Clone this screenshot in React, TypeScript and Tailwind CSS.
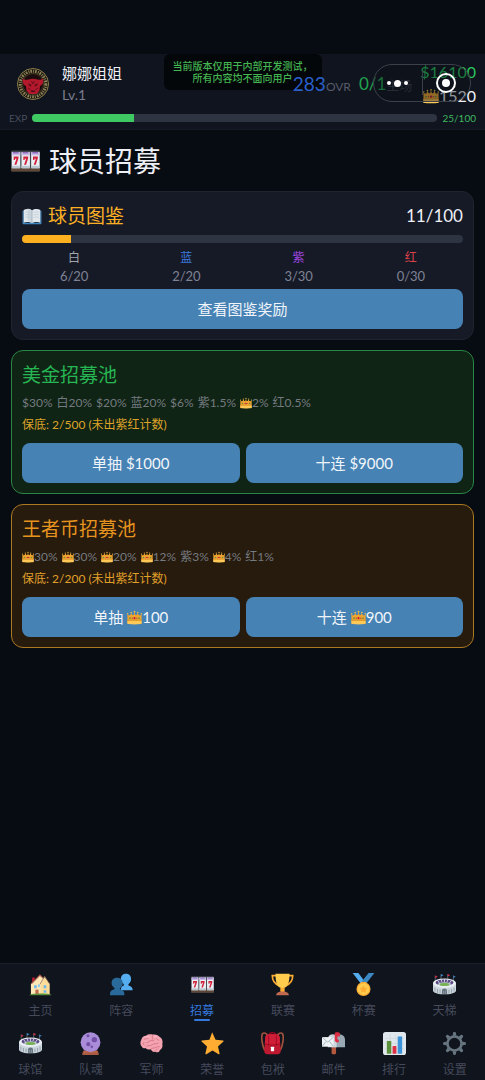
import type { ReactNode } from "react";

type IconProps = { className?: string };

function Glyph({ className, children }: IconProps & { children: ReactNode }) {
  return (
    <svg viewBox="0 0 36 36" className={className} aria-hidden="true">
      {children}
    </svg>
  );
}

const SEVEN = "M0 0h6v2.2L3.4 10H.9l2.6-7.2H1.7v1.4H0z";

function Slots({ className }: IconProps) {
  return (
    <svg viewBox="0 0 36 26" className={className} aria-hidden="true">
      <rect width="36" height="26" rx="1.500" fill="#41474d" />
      <path d="M0 21h36v3.500a1.500 1.500 0 0 1-1.500 1.500h-33A1.500 1.500 0 0 1 0 24.500z" fill="#5b4638" />
      {[1, 13, 25].map((x) => (
        <g key={x}>
          <rect x={x} y="2" width="10.500" height="20" rx=".8" fill="#e9eef3" />
          <rect x={x} y="2" width="10.500" height="4" fill="#c9bde6" />
          <rect x={x + 1.5} y="2" width="7" height="1.600" fill="#8a64b8" />
          <rect x={x} y="19" width="10.500" height="3" fill="#bcc6d0" />
          <path d={SEVEN} transform={`translate(${x + 2.3} 7.500)`} fill="#d2243f" />
        </g>
      ))}
    </svg>
  );
}

function Book({ className }: IconProps) {
  return (
    <Glyph className={className}>
      <path d="M1 9l2-1v22h30V8l2 1v22.500c0 .8-.7 1.500-1.500 1.500h-31C1.700 33 1 32.300 1 31.500z" fill="#3b88c3" />
      <path d="M3 7c4-2.500 11-2.500 15 1 4-3.500 11-3.500 15-1v23c-4-2-11-2-15 1-4-3-11-3-15-1z" fill="#e1e8ed" />
      <path d="M18 8c-2-2-5-3-8-3v22c3 0 6 1 8 3z" fill="#ccd6dd" />
      <path d="M18 8v23" stroke="#8899a6" strokeWidth="1" />
      <path d="M5.500 11.500c3-1 7-1 10 .5M5.500 16c3-1 7-1 10 .5M5.500 20.500c3-1 7-1 10 .5M20.500 12c3-1.500 7-1.500 10-.5M20.500 16.500c3-1.500 7-1.500 10-.5M20.500 21c3-1.500 7-1.500 10-.5" stroke="#b5c2cc" fill="none" />
    </Glyph>
  );
}

function Crown({ className }: IconProps) {
  return (
    <svg viewBox="0 0 36 34" className={className} aria-hidden="true">
      <path d="M1 8l3 4 4-1 2-5 3 5h3l2-7 2 7h3l3-5 2 5 4 1 3-4v24H1z" fill="#f0a430" />
      <g fill="#f9c64b">
        <circle cx="1.800" cy="8" r="1.600" />
        <circle cx="10" cy="5" r="1.800" />
        <circle cx="18" cy="3" r="2" />
        <circle cx="26" cy="5" r="1.800" />
        <circle cx="34.200" cy="8" r="1.600" />
      </g>
      <path d="M1 24h34v8c-9 2-25 2-34 0z" fill="#ffc957" />
      <path d="M1 22.500h34v2H1z" fill="#d28a25" />
      <circle cx="7" cy="18.500" r="2" fill="#5c913b" />
      <circle cx="18" cy="18.500" r="2.500" fill="#be1931" />
      <circle cx="29" cy="18.500" r="2" fill="#5c913b" />
      <circle cx="12.500" cy="18.500" r="1.400" fill="#8c3f4c" />
      <circle cx="23.500" cy="18.500" r="1.400" fill="#8c3f4c" />
    </svg>
  );
}

function House({ className }: IconProps) {
  return (
    <Glyph className={className}>
      <rect x="5" y="7" width="4" height="8" fill="#be1931" />
      <path d="M3 17L17 3l15 14v17H3z" fill="#ffe8b6" />
      <path d="M17 2L3 16.500l1.200 1.200L17 4.500l5 4.500 1.300-1.300z" fill="#a0594a" />
      <path d="M18 19l6.500-13L32 17v17H18z" fill="#fbdc98" />
      <path d="M24.500 5L17 18M24.500 5L32.500 17.500" stroke="#8f6a5a" strokeWidth="1.200" />
      <path d="M8 19h4v5H8zM23 19h4v5h-4zM23 27h4v4h-4z" fill="#6db6ee" />
      <path d="M14 18h3v4h-3z" fill="#88c9f9" />
      <path d="M10 26h5v8h-5z" fill="#c1694f" />
      <path d="M1 34c4-2.500 30-2.500 34 0v1H1z" fill="#5c913b" />
    </Glyph>
  );
}

function People({ className }: IconProps) {
  return (
    <Glyph className={className}>
      <path d="M17 27c0-4 1-6 4-7 1-.5 1-2 0-3-3-2-4-5-4-8 0-5 3.500-8 8-8s8 3 8 8c0 3-1 6-3.500 8-1 1-1 2.500 0 3 4 1 6 3 6 7z" fill="#55acee" />
      <path d="M0 35v-2c0-4 2-6 6-7 1.500-.5 1.500-2 .5-3-2.500-2-4-4.500-4-7.500 0-5 4-8 8.500-8s9 3 9 8c0 3-1.500 6-4 8-1 1-1 2 .5 2.500 4 1 6 3 6 7v2z" fill="#2a6a9b" />
    </Glyph>
  );
}

function Trophy({ className }: IconProps) {
  return (
    <Glyph className={className}>
      <path d="M9 4H2c0 8 3 13 11 16M27 4h7c0 8-3 13-11 16" fill="none" stroke="#ffac33" strokeWidth="2.600" />
      <path d="M7 1h22c0 12-2 20-8 22v6h-6v-6C9 21 7 13 7 1z" fill="#ffcc4d" />
      <path d="M15 23h6v8h-6z" fill="#ffac33" />
      <path d="M8 35c0-4 4-6 10-6s10 2 10 6z" fill="#c1694f" />
    </Glyph>
  );
}

function Medal({ className }: IconProps) {
  return (
    <Glyph className={className}>
      <path d="M1 0h9l9 12-5 5z" fill="#55acee" />
      <path d="M35 0h-9L14 15l8 2z" fill="#3b88c3" />
      <path d="M14 14h8v4h-8z" fill="#ffac33" />
      <circle cx="18" cy="25" r="11" fill="#ffac33" />
      <circle cx="18" cy="25" r="9" fill="#ffcc4d" />
      <path d="M18 19l2 4 4.400.6-3.200 3 .8 4.400-4-2.100-4 2.100.8-4.400-3.200-3 4.400-.6z" fill="#ffac33" />
    </Glyph>
  );
}

function Stadium({ className }: IconProps) {
  return (
    <Glyph className={className}>
      <path d="M3.500 4v10M12.500 2v8M23 2v8M32 4v10" stroke="#99aab5" strokeWidth=".8" />
      <path d="M3.500 4l4 2-4 2zM23 1.500l4 2-4 2z" fill="#dd2e44" />
      <path d="M12.500 1.500l4 2-4 2zM32 4l3.500 2-3.500 2z" fill="#3b88c3" />
      <path d="M0 15h36v13c-3 7-33 7-36 0z" fill="#ccd6dd" />
      <ellipse cx="18" cy="16" rx="18" ry="7.500" fill="#e8eef2" />
      <ellipse cx="18" cy="15" rx="14" ry="5" fill="#5c4b85" />
      <ellipse cx="18" cy="17.500" rx="10" ry="3" fill="#c6d0d8" />
      <ellipse cx="18" cy="18" rx="7.500" ry="2.300" fill="#77b255" />
      <path d="M7 11.500l3 4M12.500 10l1.500 4M18 9.500V14M23.500 10L22 14M29 11.500l-3 4" stroke="#dbe2e8" strokeWidth="1.400" />
      <path d="M3 23v6M7 25v6M11 26v6M25 26v6M29 25v6M33 23v6" stroke="#8996a1" strokeWidth="1.300" />
      <path d="M14 33v-5c0-5 8-5 8 0v5z" fill="#66757f" />
      <path d="M16.500 33v-5M19.500 33v-5" stroke="#9aa8b3" />
    </Glyph>
  );
}

function Crystal({ className }: IconProps) {
  return (
    <Glyph className={className}>
      <path d="M7 29h22l2 5c.3 1-.3 2-1.500 2h-23C5.300 36 4.700 35 5 34z" fill="#a85a43" />
      <circle cx="18" cy="16" r="15.500" fill="#aa8dd8" />
      <circle cx="24" cy="12" r="4.200" fill="#7450a8" />
      <circle cx="14.500" cy="19" r="3.200" fill="#7450a8" />
      <circle cx="14" cy="6" r="2.400" fill="#7450a8" />
      <circle cx="20" cy="23" r="2" fill="#7450a8" />
      <path d="M8 29c6 3 14 3 20 0l1 3H7z" fill="#c1694f" />
    </Glyph>
  );
}

function Brain({ className }: IconProps) {
  return (
    <Glyph className={className}>
      <path d="M3 23c-3-3-3-8-1-11 1-4 4-6 7-6 3-3 8-3 11-2 5-1 9 1 11 4 4 2 5 7 4 11 1 4-1 8-4 9 0 3-4 5-7 3-3 1-6-1-7-4-4 1-7 0-8-2-3 1-5 0-6-2z" fill="#f4a3b1" />
      <path d="M6 12c3-3 5 0 7-3M4 18c4-4 6 1 10-3s6 1 9-3M10 23c3-4 6 0 9-3s6 0 10-3M20 5c-2 3 2 4-1 7M28 8c-4 1-2 4 2 5M17 27c2-3 5-1 8-3s4 0 6-1M7 21l-2-2M24 29c1-2 3-1 4-3" fill="none" stroke="#d26a80" strokeWidth="1.200" />
      <path d="M8 9c2-2 5-2 7-1M22 7c3-1 5 1 7 3M7 16c2-1 3-1 4 0" fill="none" stroke="#ffc9d2" strokeWidth="1.200" />
    </Glyph>
  );
}

function Star({ className }: IconProps) {
  return (
    <Glyph className={className}>
      <path d="M18 1.500l4.800 10.600 11.700 1.200c1 .1 1.300 1 .6 1.700l-8.500 7.700 2.500 11.100c.2 1-.7 1.600-1.500 1.100L18 29l-9.600 5.900c-.8.500-1.700-.1-1.500-1.100l2.500-11.100L.9 15c-.7-.7-.4-1.600.6-1.700l11.700-1.200L17 1.500c.3-.7.7-.7 1 0z" fill="#ffac33" />
    </Glyph>
  );
}

function Backpack({ className }: IconProps) {
  return (
    <Glyph className={className}>
      <path d="M6 29C2 22 0 9 2 3c3-3 7-1 9 4M30 29c4-7 6-20 4-26-3-3-7-1-9 4" fill="none" stroke="#a0523d" strokeWidth="2.600" />
      <path d="M13 4c1-4 9-4 10 0" fill="none" stroke="#a0041e" strokeWidth="2" />
      <path d="M7 7c2-5 20-5 22 0l2 22c0 4-2 6-5 6H10c-3 0-5-2-5-6z" fill="#be1931" />
      <path d="M7 7c2-5 20-5 22 0l1 11c-4 3-20 3-24 0z" fill="#cf1f38" />
      <path d="M6 18c4 3 20 3 24 0" fill="none" stroke="#a0041e" strokeWidth="1.200" />
      <path d="M12 6v15M24 6v15" stroke="#a0041e" strokeWidth="1.300" />
      <rect x="15.500" y="23" width="5" height="7" rx="1" fill="#fff" />
    </Glyph>
  );
}

function Mailbox({ className }: IconProps) {
  return (
    <Glyph className={className}>
      <path d="M15 22h7v11c0 3-7 3-7 0z" fill="#b5583e" />
      <path d="M15 4h13c5 0 8 4 8 8v12H15z" fill="#99aab5" />
      <path d="M9 12c0-5 3-8 7-8s7 3 7 8v12H9z" fill="#ccd6dd" />
      <path d="M0 8h18v15H0z" fill="#eef3f6" />
      <path d="M0 8l9 8 9-8M0 23l6-8M18 23l-6-8" fill="none" stroke="#99aab5" strokeWidth="1.300" />
      <path d="M20 2c0-2 7-2 8 0v5h-4v8h-4z" fill="#dd2e44" />
      <circle cx="24" cy="14" r="2.600" fill="#dd2e44" />
    </Glyph>
  );
}

function Chart({ className }: IconProps) {
  return (
    <Glyph className={className}>
      <rect width="36" height="36" rx="4" fill="#e1e8ed" />
      <path d="M3 10h30M3 18h30M3 26h30M11 3v30M20 3v30" stroke="#ccd6dd" />
      <path d="M6 14h7v20H6z" fill="#5c913b" />
      <path d="M15 22h6v12h-6z" fill="#dd2e44" />
      <path d="M23 7h7v27h-7z" fill="#3b94d9" />
    </Glyph>
  );
}

function Gear({ className }: IconProps) {
  return (
    <Glyph className={className}>
      <circle cx="18" cy="18" r="11" fill="none" stroke="#66757f" strokeWidth="4" />
      {[0, 45, 90, 135, 180, 225, 270, 315].map((angle) => (
        <path key={angle} d="M15 6l.9-5c.1-1.300 4.100-1.300 4.200 0L21 6z" fill="#66757f" transform={`rotate(${angle} 18 18)`} />
      ))}
    </Glyph>
  );
}

function TeamBadge({ className }: IconProps) {
  return (
    <svg viewBox="0 0 64 64" className={className} role="img" aria-label="球队徽章">
      <circle cx="32" cy="32" r="31" fill="#17150f" stroke="#8f7d4e" strokeWidth="2" />
      <circle cx="32" cy="32" r="25.500" fill="none" stroke="#8d8055" strokeWidth="6" strokeDasharray="3.500 2.200 2 1.800" />
      <circle cx="32" cy="32" r="21" fill="#1c0c0e" stroke="#74633b" strokeWidth="1" />
      <path d="M12 21c3 3 7 3 11 2 5-2 13-2 18 0 4 1 8 1 11-2 2 8-1 13-6 15l-1 9-6 7H25l-6-7-1-9c-5-2-8-7-6-15z" fill="#b3182c" />
      <path d="M23 31l6 3-1 3-5-3zM41 31l-6 3 1 3 5-3zM27 45h10l-2 3h-6z" fill="#4c0c15" />
      <path d="M29 26l3 6 3-6M22 40l5 3M42 40l-5 3" stroke="#6e101e" strokeWidth="2" fill="none" />
    </svg>
  );
}

function Meter({ value, label, trackClass, fillClass }: { value: number; label: string; trackClass: string; fillClass: string }) {
  return (
    <div
      role="progressbar"
      aria-label={label}
      aria-valuenow={value}
      aria-valuemin={0}
      aria-valuemax={100}
      className={`h-2 overflow-hidden rounded-full bg-[#2f3442] ${trackClass}`}
    >
      <div className={`h-full ${fillClass}`} style={{ width: `${value}%` }} />
    </div>
  );
}

function ActionButton({ children }: { children: ReactNode }) {
  return (
    <button type="button" className="flex h-10 w-full items-center justify-center rounded-lg bg-[#4682b4] text-[15px] text-[#f1f5fa]">
      {children}
    </button>
  );
}

function Odds({ items }: { items: string[] }) {
  return (
    <p className="mt-[5px] flex flex-wrap gap-x-1 text-xs leading-[18px] text-[#747a80]">
      {items.map((item, i) => (
        <span key={i} className="flex items-center">
          {item.startsWith("K") ? (
            <>
              <Crown className="size-3" />
              {item.slice(1)}
            </>
          ) : (
            item
          )}
        </span>
      ))}
    </p>
  );
}

const rarities = [
  { name: "白", count: "6/20", color: "text-[#a3a6af]" },
  { name: "蓝", count: "2/20", color: "text-[#3b78dc]" },
  { name: "紫", count: "3/30", color: "text-[#a046e0]" },
  { name: "红", count: "0/30", color: "text-[#df4149]" },
];

const primaryNav = [
  { label: "主页", Icon: House },
  { label: "阵容", Icon: People },
  { label: "招募", Icon: Slots, active: true },
  { label: "联赛", Icon: Trophy },
  { label: "杯赛", Icon: Medal },
  { label: "天梯", Icon: Stadium },
];

const secondaryNav = [
  { label: "球馆", Icon: Stadium },
  { label: "队魂", Icon: Crystal },
  { label: "军师", Icon: Brain },
  { label: "荣誉", Icon: Star },
  { label: "包袱", Icon: Backpack },
  { label: "邮件", Icon: Mailbox },
  { label: "排行", Icon: Chart },
  { label: "设置", Icon: Gear },
];

function NavItem({ label, Icon, active }: { label: string; Icon: (p: IconProps) => ReactNode; active?: boolean }) {
  return (
    <a
      href="#"
      aria-current={active ? "page" : undefined}
      className={`relative flex flex-1 flex-col items-center gap-[7px] text-xs leading-4 ${active ? "text-[#3478dc]" : "text-[#464a5b]"}`}
    >
      <Icon className="size-[23px]" />
      {label}
      {active && <span className="absolute -bottom-[2px] h-[2px] w-4 rounded-full bg-[#3478dc]" />}
    </a>
  );
}

export default function App() {
  return (
    <div className="flex min-h-screen flex-col bg-[#070b12] pt-[54px] font-[Lato,'Noto_Sans_CJK_SC',sans-serif] text-[#eef0f6]">
      <header className="relative border-b border-[#151a25] bg-[#0f141e] px-[9px] pb-[7px]">
        <div className="flex h-[60px] items-center">
          <TeamBadge className="ml-2 size-8 shrink-0" />
          <div className="ml-[13px] flex-1">
            <p className="text-[15px] leading-[22px]">娜娜姐姐</p>
            <p className="text-sm leading-[22px] text-[#787c8c]">Lv.1</p>
          </div>
          <p className="relative z-10 mr-2 flex items-baseline">
            <span className="text-[19px] text-[#2b5fc9]">283</span>
            <span className="text-xs text-[#565b69]">OVR</span>
          </p>
          <p className="mr-2 flex items-baseline">
            <span className="text-[17px] text-[#22a34e]">0/1</span>
            <span className="text-[13px] text-[#3a3f4b]">主场</span>
          </p>
          <div className="text-right text-base leading-6">
            <p className="text-[#2bc45c]">$16100</p>
            <p className="flex items-center justify-end">
              <Crown className="size-4" />
              1520
            </p>
          </div>
        </div>
        <div className="flex h-2 items-center gap-[5px] text-[10px]">
          <span className="text-[#4a4f5e]">EXP</span>
          <Meter value={25} label="EXP" trackClass="flex-1" fillClass="bg-[#3fc963]" />
          <span className="text-[#3fb860]">25/100</span>
        </div>

        <p className="absolute top-0 left-1/2 w-[158px] -translate-x-1/2 rounded-md bg-[#04070a] py-[6px] text-center text-[10px] leading-3 font-medium text-[#45b551]">
          当前版本仅用于内部开发测试，
          <br />
          所有内容均不面向用户
        </p>

        <div className="absolute top-[10px] right-[14px] flex h-[38px] w-[98px] items-center rounded-full border border-[#3b404a] bg-[#0b0f17]/40">
          <button type="button" aria-label="更多" className="flex h-full flex-1 items-center justify-center gap-[3px]">
            <span className="size-1 rounded-full bg-white" />
            <span className="size-[7px] rounded-full bg-white" />
            <span className="size-1 rounded-full bg-white" />
          </button>
          <span className="h-6 w-px bg-[#3b404a]" />
          <button type="button" aria-label="关闭" className="flex h-full flex-1 items-center justify-center">
            <span className="flex size-5 items-center justify-center rounded-full border-2 border-white">
              <span className="size-2 rounded-full bg-white" />
            </span>
          </button>
        </div>
      </header>

      <main className="flex flex-1 flex-col gap-[10px] px-[11px] pt-[10px]">
        <h1 className="flex h-[41px] items-center gap-[9px] text-[28px] leading-10">
          <Slots className="h-[22px] w-[29px]" />
          球员招募
        </h1>

        <section className="rounded-xl border border-[#20242f] bg-[#161a27] p-[10px]">
          <div className="flex h-7 items-center justify-between">
            <h2 className="flex items-center gap-[6px] text-[19px] text-[#fbb024]">
              <Book className="size-5" />
              球员图鉴
            </h2>
            <span className="text-[17px]">11/100</span>
          </div>
          <Meter value={11} label="球员图鉴" trackClass="mt-[5px]" fillClass="bg-[#fcb01f]" />
          <ul className="mt-[6px] mb-1 grid grid-cols-4 gap-x-2 text-center leading-[18px]">
            {rarities.map((r) => (
              <li key={r.name}>
                <p className={`text-xs leading-[18px] ${r.color}`}>{r.name}</p>
                <p className="text-[13px] leading-[18px] text-[#7e8294]">{r.count}</p>
              </li>
            ))}
          </ul>
          <ActionButton>查看图鉴奖励</ActionButton>
        </section>

        <section className="rounded-xl border border-[#298645] bg-[#102415] p-[10px]">
          <h2 className="text-[19px] leading-7 text-[#26b653]">美金招募池</h2>
          <Odds items={["$30%", "白20%", "$20%", "蓝20%", "$6%", "紫1.5%", "K2%", "红0.5%"]} />
          <p className="mt-1 text-xs leading-[18px] text-[#dfa329]">保底: 2/500 (未出紫红计数)</p>
          <div className="mt-[9px] grid grid-cols-2 gap-[6px]">
            <ActionButton>单抽 $1000</ActionButton>
            <ActionButton>十连 $9000</ActionButton>
          </div>
        </section>

        <section className="rounded-xl border border-[#ab7922] bg-[#271b0d] p-[10px]">
          <h2 className="text-[19px] leading-7 text-[#e6941f]">王者币招募池</h2>
          <Odds items={["K30%", "K30%", "K20%", "K12%", "紫3%", "K4%", "红1%"]} />
          <p className="mt-1 text-xs leading-[18px] text-[#e0a02a]">保底: 2/200 (未出紫红计数)</p>
          <div className="mt-[9px] grid grid-cols-2 gap-[6px]">
            <ActionButton>
              <span className="mr-1">单抽</span>
              <Crown className="size-[15px]" />
              100
            </ActionButton>
            <ActionButton>
              <span className="mr-1">十连</span>
              <Crown className="size-[15px]" />
              900
            </ActionButton>
          </div>
        </section>
      </main>

      <nav aria-label="主导航" className="border-t border-[#1a1f29] bg-[#0f141d] pt-[9px] pb-[2px]">
        <div className="flex">
          {primaryNav.map((item) => (
            <NavItem key={item.label} {...item} />
          ))}
        </div>
        <div className="mt-[13px] flex">
          {secondaryNav.map((item) => (
            <NavItem key={item.label} {...item} />
          ))}
        </div>
      </nav>
    </div>
  );
}
